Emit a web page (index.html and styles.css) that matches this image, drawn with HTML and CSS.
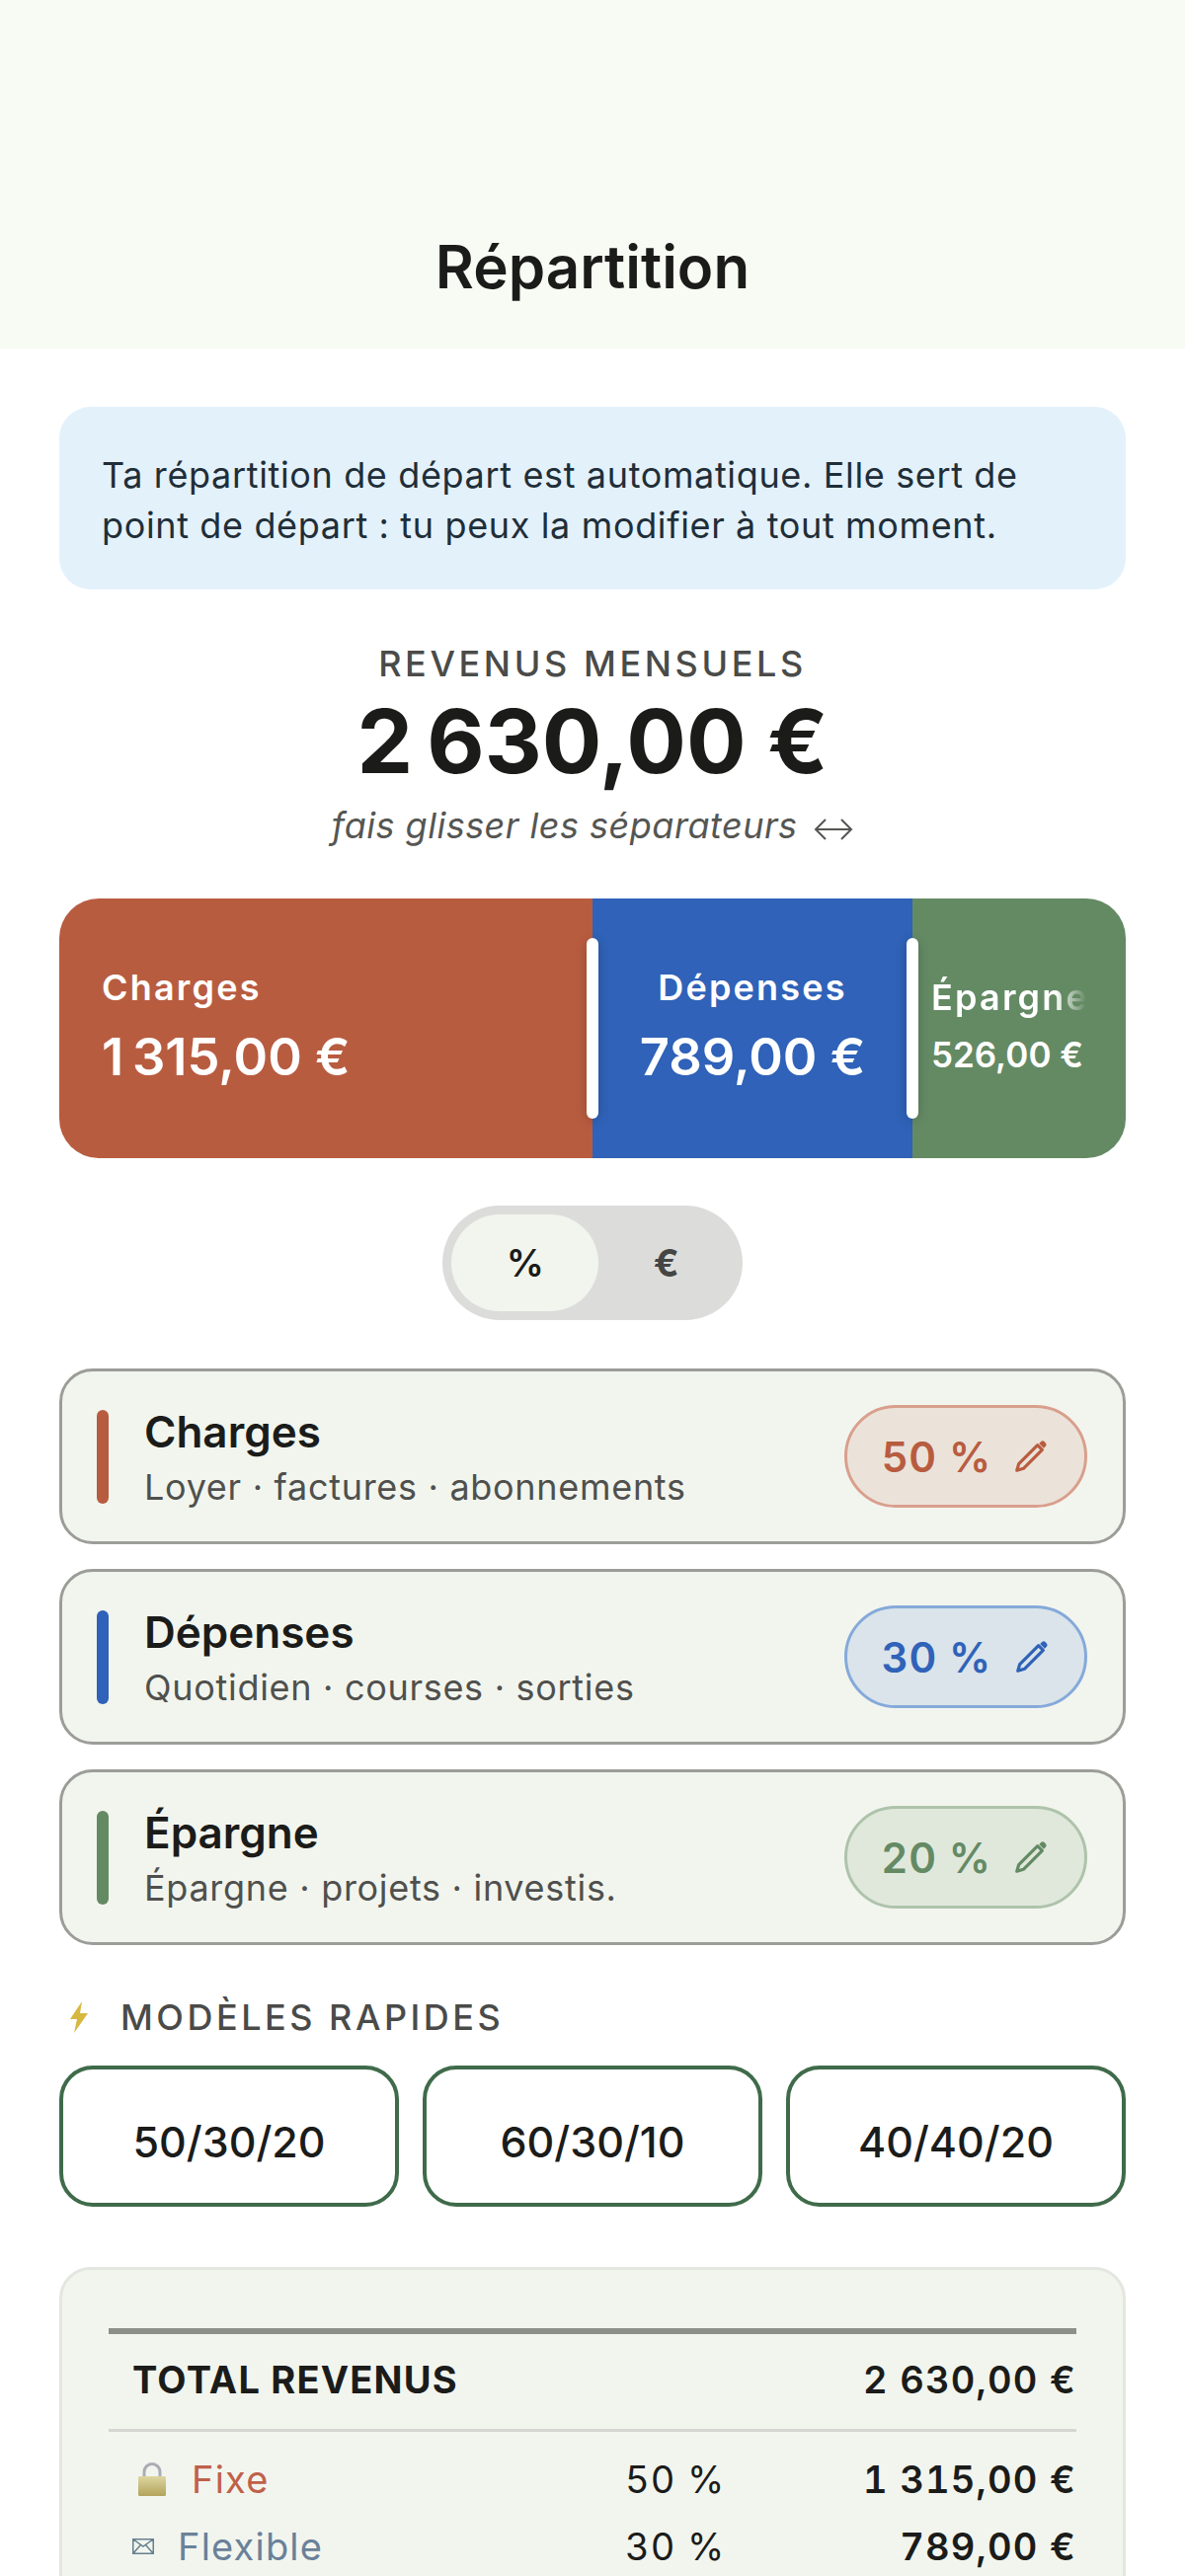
FILE: index.html
```html
<!DOCTYPE html>
<html lang="fr">
<head>
  <meta charset="UTF-8" />
  <meta name="viewport" content="width=device-width, initial-scale=1.0" />
  <title>Répartition</title>
  <link rel="stylesheet" href="styles.css">
</head>
<body>
  <header class="top-bar">
    <h1 class="top-title">Répartition</h1>
  </header>

  <main class="content">
    <p class="info-box">Ta répartition de départ est automatique. Elle sert de point de départ : tu peux la modifier à tout moment.</p>

    <section class="income">
      <p class="income-label">REVENUS MENSUELS</p>
      <p class="income-value">2&#8239;630,00 €</p>
      <p class="income-hint">fais glisser les séparateurs <svg class="hint-arrow" viewBox="0 0 40 24"><path d="M12 2 2 12l10 10M28 2l10 10-10 10M2 12h36" /></svg></p>
    </section>

    <section class="bar">
      <div class="seg seg-charges">
        <span class="seg-label">Charges</span>
        <span class="seg-value">1&#8239;315,00 €</span>
        <i class="handle"></i>
      </div>
      <div class="seg seg-depenses">
        <span class="seg-label">Dépenses</span>
        <span class="seg-value">789,00 €</span>
        <i class="handle"></i>
      </div>
      <div class="seg seg-epargne">
        <span class="seg-label">Épargne</span>
        <span class="seg-value">526,00 €</span>
      </div>
    </section>

    <div class="toggle">
      <span class="toggle-opt active">%</span>
      <span class="toggle-opt">€</span>
    </div>

    <section class="cards">
      <article class="card charges">
        <i class="card-mark"></i>
        <div class="card-text">
          <h2 class="card-name">Charges</h2>
          <p class="card-sub">Loyer · factures · abonnements</p>
        </div>
        <button class="pill">50 % <svg class="pencil" viewBox="0 0 24 24"><path class="pencil-body" d="M16.2 4.8 19.2 7.8 7.2 19.8 3 21 4.2 16.8Z" /><path class="pencil-cap" d="M17.2 3.8 18.4 2.6a1.6 1.6 0 0 1 2.2 0l.8.8a1.6 1.6 0 0 1 0 2.2L20.2 6.8Z" /></svg></button>
      </article>
      <article class="card depenses">
        <i class="card-mark"></i>
        <div class="card-text">
          <h2 class="card-name">Dépenses</h2>
          <p class="card-sub">Quotidien · courses · sorties</p>
        </div>
        <button class="pill">30 % <svg class="pencil" viewBox="0 0 24 24"><path class="pencil-body" d="M16.2 4.8 19.2 7.8 7.2 19.8 3 21 4.2 16.8Z" /><path class="pencil-cap" d="M17.2 3.8 18.4 2.6a1.6 1.6 0 0 1 2.2 0l.8.8a1.6 1.6 0 0 1 0 2.2L20.2 6.8Z" /></svg></button>
      </article>
      <article class="card epargne">
        <i class="card-mark"></i>
        <div class="card-text">
          <h2 class="card-name">Épargne</h2>
          <p class="card-sub">Épargne · projets · investis.</p>
        </div>
        <button class="pill">20 % <svg class="pencil" viewBox="0 0 24 24"><path class="pencil-body" d="M16.2 4.8 19.2 7.8 7.2 19.8 3 21 4.2 16.8Z" /><path class="pencil-cap" d="M17.2 3.8 18.4 2.6a1.6 1.6 0 0 1 2.2 0l.8.8a1.6 1.6 0 0 1 0 2.2L20.2 6.8Z" /></svg></button>
      </article>
    </section>

    <h3 class="models-title">
      <svg class="bolt" viewBox="0 0 20 32"><path d="M13 0 1 18h7L5 32 19 12h-8Z" /></svg>
      MODÈLES RAPIDES
    </h3>
    <div class="models">
      <button class="model">50/30/20</button>
      <button class="model">60/30/10</button>
      <button class="model">40/40/20</button>
    </div>

    <section class="summary">
      <div class="summary-total">
        <span>TOTAL REVENUS</span>
        <span class="total-amount">2&nbsp;630,00 €</span>
      </div>
      <div class="summary-row">
        <span class="row-name fixe">
          <svg class="lock" viewBox="0 0 28 34">
            <defs>
              <linearGradient id="lock-metal" x1="0" y1="0" x2="0" y2="1"><stop offset="0" stop-color="#dcd6a0" /><stop offset="1" stop-color="#b3a45c" /></linearGradient>
            </defs>
            <path d="M6 16V9.5a8 8 0 0 1 16 0V16" fill="none" stroke="#a9adb4" stroke-width="3" />
            <rect x="0" y="14" width="28" height="20" rx="1.5" fill="url(#lock-metal)" />
          </svg>
          Fixe
        </span>
        <span class="row-pct">50 %</span>
        <span class="row-amount">1&nbsp;315,00 €</span>
      </div>
      <div class="summary-row">
        <span class="row-name flexible">
          <svg class="mail" viewBox="0 0 22 16"><path d="M.75.75h20.5v14.5H.75ZM.75.75 11 8 21.25.75M.75 15.25 8.5 6.5M21.25 15.25 13.5 6.5" /></svg>
          Flexible
        </span>
        <span class="row-pct">30 %</span>
        <span class="row-amount">789,00 €</span>
      </div>
    </section>
  </main>
</body>
</html>
```

FILE: styles.css
```css
html, body {
  margin: 0;
  padding: 0;
  height: 100%;
  overflow: hidden;
  background: #fff;
  color: #1b1c1a;
  font-family: Inter, "Liberation Sans", sans-serif;
}
h1, h2, h3, p {
  margin: 0;
}
button {
  font-family: inherit;
  cursor: pointer;
}

/* top */
.top-bar {
  height: 353px;
  box-sizing: border-box;
  padding-top: 234px;
  background: #f8fbf3;
  text-align: center;
}
.top-title {
  font-size: 60px;
  line-height: 72px;
  font-weight: 600;
}
.content {
  padding: 59px 60px 0;
}
.info-box {
  box-sizing: border-box;
  height: 185px;
  padding: 44px 40px 0 43px;
  border-radius: 32px;
  background: #e3f1fb;
  color: #1f2e38;
  font-size: 36px;
  line-height: 51px;
  letter-spacing: 0.64px;
}

/* income */
.income {
  margin-top: 55px;
  text-align: center;
}
.income-label {
  color: #4a4b49;
  font-size: 36px;
  line-height: 40px;
  font-weight: 500;
  letter-spacing: 3.6px;
}
.income-value {
  margin-top: 6px;
  font-size: 90px;
  line-height: 106px;
  font-weight: 700;
}
.income-hint {
  margin-top: 10px;
  color: #555653;
  font-size: 36px;
  line-height: 44px;
  font-style: italic;
  letter-spacing: 0.5px;
}
.hint-arrow {
  width: 40px;
  height: 24px;
  margin-left: 6px;
  vertical-align: -3px;
  fill: none;
  stroke: #555653;
  stroke-width: 2;
}

/* bar */
.bar {
  display: flex;
  height: 263px;
  margin-top: 52px;
  border-radius: 40px;
  color: #fff;
}
.seg {
  position: relative;
  box-sizing: border-box;
  display: flex;
  flex-direction: column;
  justify-content: center;
  min-width: 0;
  padding-bottom: 3px;
}
.seg-label {
  font-size: 36px;
  line-height: 44px;
  font-weight: 600;
  letter-spacing: 2.2px;
}
.seg-value {
  margin-top: 16px;
  font-size: 52.5px;
  line-height: 64px;
  font-weight: 600;
}
.seg-charges {
  width: 540px;
  padding-left: 43px;
  background: #b85c40;
  border-radius: 40px 0 0 40px;
}
.seg-depenses {
  width: 324px;
  align-items: center;
  background: #2f62b8;
}
.seg-epargne {
  width: 216px;
  padding-left: 19px;
  background: #648a64;
  border-radius: 0 40px 40px 0;
}
.seg-epargne .seg-label {
  width: 157px;
  overflow: hidden;
  white-space: nowrap;
  -webkit-mask-image: linear-gradient(to right, #000 80%, transparent);
  mask-image: linear-gradient(to right, #000 80%, transparent);
}
.seg-epargne .seg-value {
  margin-top: 12px;
  font-size: 35px;
  line-height: 48px;
}
.handle {
  position: absolute;
  top: 40px;
  right: -6px;
  width: 12px;
  height: 183px;
  border-radius: 6px;
  background: #fff;
  box-shadow: 0 2px 12px rgba(0, 0, 0, 0.2);
  z-index: 1;
}

/* toggle */
.toggle {
  box-sizing: border-box;
  display: flex;
  width: 304px;
  height: 116px;
  margin: 48px auto 0;
  padding: 9px;
  border-radius: 58px;
  background: #dcdddb;
}
.toggle-opt {
  display: flex;
  align-items: center;
  justify-content: center;
  width: 137px;
  color: #454644;
  font-size: 38px;
  font-weight: 700;
}
.toggle-opt.active {
  width: 150px;
  border-radius: 50px;
  background: #f2f5ee;
  color: #1b1c1a;
  font-weight: 600;
}

/* cards */
.cards {
  display: flex;
  flex-direction: column;
  gap: 25px;
  margin-top: 49px;
}
.card {
  box-sizing: border-box;
  display: flex;
  align-items: center;
  height: 178px;
  padding: 0 36px 0 35px;
  border: 3px solid #9c9d98;
  border-radius: 34px;
  background: #f2f5ee;
}
.card-mark {
  flex: none;
  width: 12px;
  height: 95px;
  border-radius: 6px;
}
.card-text {
  flex: 1;
  margin-left: 36px;
  padding-top: 4px;
}
.card-name {
  font-size: 44px;
  line-height: 50px;
  font-weight: 600;
}
.card-sub {
  margin-top: 8px;
  color: #4f504d;
  font-size: 36px;
  line-height: 46px;
  letter-spacing: 0.7px;
}
.pill {
  box-sizing: border-box;
  display: flex;
  align-items: center;
  justify-content: center;
  gap: 21px;
  width: 246px;
  height: 104px;
  padding: 0;
  border: 3px solid;
  border-radius: 52px;
  font-size: 42px;
  font-weight: 600;
  letter-spacing: 1.2px;
}
.pencil {
  width: 38px;
  height: 38px;
}
.pencil-body {
  fill: none;
  stroke: currentColor;
  stroke-width: 2;
  stroke-linejoin: round;
}
.pencil-cap {
  fill: currentColor;
}
.charges .card-mark { background: #b85c40; }
.charges .pill { color: #b85c40; border-color: #d99f8d; background: #ebe3da; }
.depenses .card-mark { background: #2f62b8; }
.depenses .pill { color: #2f62b8; border-color: #85a9da; background: #dae4ea; }
.epargne .card-mark { background: #648a64; }
.epargne .pill { color: #648a64; border-color: #aec3ab; background: #e0e8dc; }

/* models */
.models-title {
  display: flex;
  align-items: center;
  gap: 32px;
  margin-top: 52px;
  padding-left: 10px;
  color: #4a4b49;
  font-size: 36px;
  line-height: 42px;
  font-weight: 500;
  letter-spacing: 3.5px;
}
.bolt {
  flex: none;
  width: 20px;
  height: 32px;
  fill: #d8b73f;
}
.models {
  display: grid;
  grid-template-columns: repeat(3, 1fr);
  gap: 24px;
  margin-top: 28px;
}
.model {
  height: 143px;
  padding: 10px 0 0;
  border: 4px solid #3f6b4a;
  border-radius: 34px;
  background: #fff;
  color: #1b1c1a;
  font-size: 43px;
  font-weight: 500;
}

/* summary */
.summary {
  box-sizing: border-box;
  height: 400px;
  margin-top: 61px;
  padding: 59px 47px 0;
  border: 3px solid #e4e6e0;
  border-radius: 32px;
  background: #f2f5ee;
}
.summary-total {
  display: flex;
  justify-content: space-between;
  box-sizing: border-box;
  height: 105px;
  padding: 23px 0 0 24px;
  border-top: 6px solid #8c8f88;
  border-bottom: 3px solid #d5d6d1;
  font-size: 38px;
  line-height: 46px;
  font-weight: 700;
  letter-spacing: 1.2px;
}
.total-amount {
  font-weight: 600;
  font-variant-numeric: tabular-nums;
}
.summary-row {
  display: grid;
  grid-template-columns: 1fr 96px 361px;
  align-items: center;
  height: 68px;
  padding-left: 24px;
  font-size: 38px;
  letter-spacing: 1.2px;
}
.summary-total + .summary-row {
  margin-top: 14px;
}
.row-name {
  display: flex;
  align-items: center;
}
.fixe { gap: 26px; color: #c0604a; }
.flexible { gap: 24px; color: #6a8199; }
.lock {
  width: 28px;
  height: 34px;
  margin-left: 6px;
}
.mail {
  width: 22px;
  height: 16px;
  fill: none;
  stroke: #66808f;
  stroke-width: 1.5;
}
.row-pct {
  font-variant-numeric: tabular-nums;
  white-space: nowrap;
}
.row-amount {
  text-align: right;
  font-weight: 600;
  font-variant-numeric: tabular-nums;
}
```
